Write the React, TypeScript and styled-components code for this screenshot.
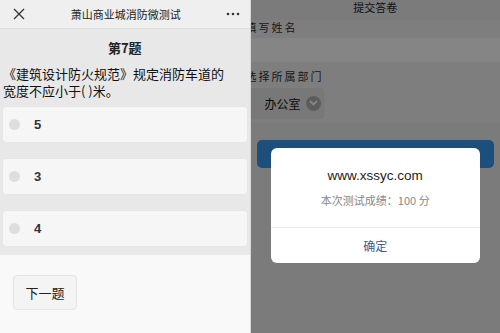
import styled, { createGlobalStyle } from "styled-components";

const GlobalStyle = createGlobalStyle`
  html, body {
    margin: 0;
    padding: 0;
    background: #ffffff;
  }
  body {
    font-family: "Noto Sans CJK SC", "Liberation Sans", sans-serif;
  }
`;

const Screen = styled.div`
  display: flex;
  width: 500px;
  height: 333px;
  overflow: hidden;
`;

/* ---------- left: quiz ---------- */

const QuizPanel = styled.div`
  display: flex;
  flex-direction: column;
  width: 250px;
  height: 100%;
`;

const TopBar = styled.div`
  display: flex;
  align-items: center;
  justify-content: space-between;
  height: 28px;
  padding: 0 10px 0 12px;
  background: #efefef;
  border-bottom: 1px solid #dedede;
`;

const TopTitle = styled.div`
  font-size: 11px;
  color: #222;
`;

const IconButton = styled.div`
  display: flex;
  align-items: center;
  justify-content: center;
  width: 14px;
  height: 14px;
`;

const QuestionArea = styled.div`
  display: flex;
  flex-direction: column;
  padding: 10px 3px 9px 3px;
  background: #e8e8e8;
`;

const QuestionNo = styled.div`
  text-align: center;
  font-size: 13px;
  line-height: 18px;
  font-weight: 700;
  color: #222;
`;

const QuestionText = styled.div`
  margin-top: 8px;
  font-size: 13px;
  line-height: 17px;
  color: #111;
`;

const Options = styled.div`
  display: flex;
  flex-direction: column;
  gap: 17px;
  margin-top: 8px;
`;

const Option = styled.div`
  display: flex;
  align-items: center;
  height: 35px;
  padding-left: 6px;
  background: #f6f6f6;
  border-radius: 3px;
  box-shadow: 0 0 1px rgba(0, 0, 0, 0.08);
`;

const Radio = styled.span`
  width: 11px;
  height: 11px;
  border-radius: 50%;
  background: #dedede;
`;

const OptionLabel = styled.span`
  margin-left: 14px;
  font-family: "Liberation Sans", sans-serif;
  font-weight: 700;
  font-size: 13px;
  color: #333;
`;

const Footer = styled.div`
  flex: 1;
  padding: 20px 13px;
  background: #f9f9f9;
`;

const NextButton = styled.button`
  width: 64px;
  height: 35px;
  padding: 0;
  font-family: "Noto Sans CJK SC", sans-serif;
  font-size: 13px;
  color: #222;
  background: #f4f4f4;
  border: 1px solid #e4e4e4;
  border-radius: 4px;
`;

/* ---------- right: submit page + dialog ---------- */

const SubmitPanel = styled.div`
  position: relative;
  width: 250px;
  height: 100%;
  background: #ececec;
  border-left: 1px solid #d6d6d6;
  overflow: hidden;
`;

const PageTitle = styled.div`
  text-align: center;
  font-size: 11px;
  line-height: 14px;
  color: #222;
`;

const FormBlock = styled.div`
  padding-bottom: 5px;
  background: #f2f2f2;
`;

const FieldLabel = styled.div<{ $top: number }>`
  margin-top: ${(p) => p.$top}px;
  margin-left: -5px;
  font-size: 11px;
  line-height: 14px;
  letter-spacing: 2px;
  color: #333;
`;

const TextField = styled.div`
  height: 24px;
  margin-top: 4px;
  background: #ffffff;
`;

const SelectBox = styled.div`
  display: flex;
  align-items: center;
  gap: 5px;
  width: fit-content;
  height: 30px;
  margin: 5px 0 0 -6px;
  padding: 0 3px 0 20px;
  background: #e6e6e6;
  border-radius: 4px;
  box-shadow: 0 1px 2px rgba(0, 0, 0, 0.08);
  font-size: 12px;
  color: #111;
`;

const Chevron = styled.span`
  display: flex;
  align-items: center;
  justify-content: center;
  width: 15px;
  height: 15px;
  border-radius: 50%;
  background: #b0b0b0;
`;

const SubmitButton = styled.div`
  height: 28px;
  margin: 17px 6px 0 6px;
  background: #3898ed;
  border-radius: 5px;
`;

const Backdrop = styled.div`
  position: absolute;
  inset: 0;
  display: flex;
  justify-content: center;
  padding-top: 148px;
  background: rgba(0, 0, 0, 0.48);
`;

const Dialog = styled.div`
  display: flex;
  flex-direction: column;
  width: 209px;
  height: 115px;
  background: #ffffff;
  border-radius: 6px;
  overflow: hidden;
`;

const DialogBody = styled.div`
  display: flex;
  flex-direction: column;
  align-items: center;
  padding: 20px 0 19px;
  border-bottom: 1px solid #ececec;
`;

const DialogTitle = styled.div`
  font-family: "Liberation Sans", sans-serif;
  font-size: 13.5px;
  line-height: 16px;
  color: #222;
`;

const DialogText = styled.div`
  margin-top: 8px;
  font-size: 11px;
  line-height: 16px;
  color: #888;
`;

const DialogAction = styled.div`
  flex: 1;
  display: flex;
  align-items: center;
  justify-content: center;
  font-size: 12px;
  color: #3b5a96;
`;

const options = ["5", "3", "4"];

export default function App() {
  return (
    <Screen>
      <GlobalStyle />
      <QuizPanel>
        <TopBar>
          <IconButton>
            <svg width="12" height="12" viewBox="0 0 12 12">
              <path d="M1 1L11 11M11 1L1 11" stroke="#333" strokeWidth="1.3" />
            </svg>
          </IconButton>
          <TopTitle>萧山商业城消防微测试</TopTitle>
          <IconButton>
            <svg width="14" height="4" viewBox="0 0 14 4">
              <circle cx="2" cy="2" r="1.3" fill="#333" />
              <circle cx="7" cy="2" r="1.3" fill="#333" />
              <circle cx="12" cy="2" r="1.3" fill="#333" />
            </svg>
          </IconButton>
        </TopBar>
        <QuestionArea>
          <QuestionNo>第7题</QuestionNo>
          <QuestionText>
            《建筑设计防火规范》规定消防车道的
            <br />
            宽度不应小于( )米。
          </QuestionText>
          <Options>
            {options.map((o) => (
              <Option key={o}>
                <Radio />
                <OptionLabel>{o}</OptionLabel>
              </Option>
            ))}
          </Options>
        </QuestionArea>
        <Footer>
          <NextButton>下一题</NextButton>
        </Footer>
      </QuizPanel>

      <SubmitPanel>
        <PageTitle>提交答卷</PageTitle>
        <FormBlock>
          <FieldLabel $top={6}>填写姓名</FieldLabel>
          <TextField />
          <FieldLabel $top={7}>选择所属部门</FieldLabel>
          <SelectBox>
            <span>办公室</span>
            <Chevron>
              <svg width="9" height="6" viewBox="0 0 9 6">
                <path d="M1 1L4.5 4.5L8 1" stroke="#fff" strokeWidth="1.8" fill="none" />
              </svg>
            </Chevron>
          </SelectBox>
        </FormBlock>
        <SubmitButton />
        <Backdrop>
          <Dialog>
            <DialogBody>
              <DialogTitle>www.xssyc.com</DialogTitle>
              <DialogText>本次测试成绩：100 分</DialogText>
            </DialogBody>
            <DialogAction>确定</DialogAction>
          </Dialog>
        </Backdrop>
      </SubmitPanel>
    </Screen>
  );
}
